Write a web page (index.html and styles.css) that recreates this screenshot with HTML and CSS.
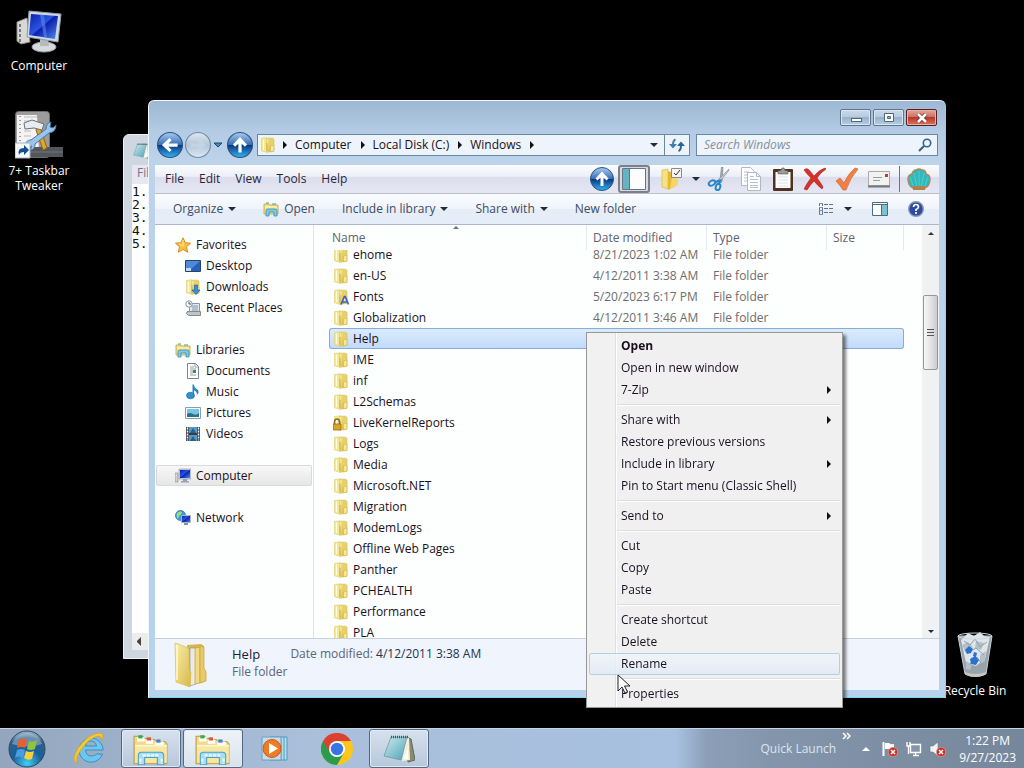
FILE: index.html
```html
<!DOCTYPE html>
<html lang="en">
<head>
    <meta charset="UTF-8">
    <meta name="viewport" content="width=device-width, initial-scale=1.0">
    <title>Windows</title>
    <link rel="stylesheet" href="styles.css">
</head>
<body>
    <!-- Shared icons -->
    <svg class="sprite" width="0" height="0" aria-hidden="true">
        <defs>
            <linearGradient id="gFolder" x1="0" x2="1" y1="0" y2="1">
                <stop offset="0" stop-color="#f8efae"/>
                <stop offset="1" stop-color="#d8b845"/>
            </linearGradient>
            <linearGradient id="gScreen" x1="0" x2="1" y1="0" y2="1">
                <stop offset="0" stop-color="#0a1fb0"/>
                <stop offset=".45" stop-color="#2a55e0"/>
                <stop offset=".5" stop-color="#0b1fae"/>
                <stop offset="1" stop-color="#4f8cf0"/>
            </linearGradient>
            <linearGradient id="gOrb" x1="0" x2="0" y1="0" y2="1">
                <stop offset="0" stop-color="#a9cdf0"/>
                <stop offset=".48" stop-color="#3a6fb8"/>
                <stop offset=".5" stop-color="#08347f"/>
                <stop offset="1" stop-color="#35b5f2"/>
            </linearGradient>
            <linearGradient id="gGrey" x1="0" x2="0" y1="0" y2="1">
                <stop offset="0" stop-color="#dde7f1"/>
                <stop offset=".5" stop-color="#b4c6d9"/>
                <stop offset="1" stop-color="#dbe8f4"/>
            </linearGradient>
            <linearGradient id="gPad" x1="0" x2="1" y1="0" y2="1">
                <stop offset="0" stop-color="#cdeaf0"/>
                <stop offset="1" stop-color="#4fa3b5"/>
            </linearGradient>
            <radialGradient id="gStart" cx=".5" cy=".9" r=".9">
                <stop offset="0" stop-color="#3fd0f5"/>
                <stop offset=".45" stop-color="#1a5f9c"/>
                <stop offset=".8" stop-color="#2f5f8c"/>
                <stop offset="1" stop-color="#a5c0d5"/>
            </radialGradient>
        </defs>
        <symbol id="folder" viewBox="0 0 16 16">
            <path d="M1.500 1.500L7 .8v14.500l-5.500-1.500z" fill="#f5e98f" stroke="#dccb6a" stroke-width=".6"/>
            <path d="M7 1.200h5.500l1.500 1v12l-7 1z" fill="#e8d268" stroke="#d3b951" stroke-width=".6"/>
            <path d="M7 1.500l3 1.500v11.500l-3 1z" fill="url(#gFolder)"/>
            <path d="M10.500 9l3.500-1v6l-3.500 1z" fill="#f5e794" stroke="#c9aa45" stroke-width=".5"/>
            <path d="M3.500 2.500v10.500" stroke="#fffce2"/>
            <path d="M7 6v8" stroke="#c4a43d" stroke-width=".8"/>
        </symbol>
        <symbol id="library" viewBox="0 0 16 16">
            <path d="M1 3h5l1 1h8v9H1z" fill="#f1df83" stroke="#b9a552" stroke-width=".8"/>
            <path d="M3 2h3M9 3h4" stroke="#62a05a"/>
            <path d="M2 6h12" stroke="#fffbd8"/>
            <path d="M3 15v-5q0-2 2-2h7q2 0 2 2v5h-3v-4H6v4z" fill="#7ccbe8" stroke="#3d8db5" stroke-width=".8"/>
        </symbol>
        <symbol id="explorer" viewBox="0 0 34 30">
            <path d="M1 5V3h8l2 2h2l1 1h6l2 2h8l2 2v19H1z" fill="#efdb8b" stroke="#b79b4b"/>
            <path d="M4 4h7v4H4zM12 6h7v4h-7zM21 8h8v4h-8z" fill="#fff"/>
            <path d="M5 2h4v3H5z" fill="#2fae4c"/>
            <path d="M13 4h4v3h-4z" fill="#d85a35"/>
            <path d="M22 6h4v3h-4z" fill="#4a80c8"/>
            <path d="M2 11h30v17H2z" fill="#f6e7a3"/>
            <path d="M2 12h30" stroke="#fffbe0"/>
            <path d="M5 30V21q0-3 3-3h18q3 0 3 3v9h-6v-7H11v7z" fill="#a8dcf0" stroke="#4f9fc4"/>
            <path d="M7 24v5M27 24v5M9 21h16" stroke="#e6f8ff" stroke-width="2" stroke-dasharray="3 1"/>
        </symbol>
        <symbol id="pc" viewBox="0 0 16 16">
            <path d="M0 5h3v9H0z" fill="#d3d3c0" stroke="#8c8c7a" stroke-width=".6"/>
            <path d="M4 1h12v10H4z" fill="#c7d2e2" stroke="#8894a8" stroke-width=".6"/>
            <path d="M5 2h10v8H5z" fill="url(#gScreen)"/>
            <path d="M8 11h4v2H8zM6 13h8v1.500H6z" fill="#9aa4b4"/>
        </symbol>
        <symbol id="up" viewBox="0 0 24 24">
            <circle cx="12" cy="12" r="11.500" fill="url(#gOrb)" stroke="#29527f"/>
            <path d="M12 4.500l6.500 7-2 2-3-3V19h-3v-8.500l-3 3-2-2z" fill="#fff"/>
        </symbol>
        <symbol id="notepad" viewBox="0 0 32 28">
            <path d="M23 2l5 2 4 21-7 2z" fill="#8a8a70" stroke="#5f6a58"/>
            <path d="M23 3l3 0 1 22-8 1z" fill="#f3efdc"/>
            <path d="M8 2h16l-6 23L1 21z" fill="url(#gPad)" stroke="#6d99a3" stroke-width=".8"/>
            <path d="M8 2h17" stroke="#44585f" stroke-width="2.500" stroke-dasharray="1 1"/>
            <path d="M20 24l5-10v10z" fill="#fff"/>
        </symbol>
        <symbol id="badge" viewBox="0 0 10 10">
            <circle cx="5" cy="5" r="4.700" fill="#c93227" stroke="#eba59f" stroke-width=".6"/>
            <path d="M3 3l4 4M7 3L3 7" stroke="#fff" stroke-width="1.500"/>
        </symbol>
    </svg>

    <main class="desktop">
        <!-- Desktop shortcuts -->
        <a class="shortcut shortcut-computer" href="#">
            <svg width="46" height="44" viewBox="0 0 46 44">
                <path d="M1 12l10-4 3 24-9 2-4-3z" fill="#d8d8d4" stroke="#8f8f8c"/>
                <path d="M4 14v18" stroke="#777" stroke-width="2" stroke-dasharray="3 2"/>
                <ellipse cx="28" cy="37" rx="12" ry="5" fill="#d7dadd" stroke="#9ba1a6"/>
                <path d="M24 28h8l1 8h-9z" fill="#b5babf"/>
                <path d="M13 1l32 3-3 28-31-5z" fill="#cfd9e4" stroke="#8d99a7"/>
                <path d="M15 4l27 2-3 23-26-4z" fill="url(#gScreen)"/>
                <path d="M24 5l4 0 3 22-3 0z" fill="#5c86ec" opacity=".6"/>
            </svg>
            <span>Computer</span>
        </a>
        <a class="shortcut shortcut-tweaker" href="#">
            <svg width="48" height="48" viewBox="0 0 48 48">
                <rect x=".5" y=".5" width="34" height="46" rx="3" fill="#9c9c9c" stroke="#6c6c6c"/>
                <path d="M2 4h20l2 36H2z" fill="#f3f3f3"/>
                <path d="M5 5v34" stroke="#444" stroke-dasharray="1 3"/>
                <path d="M9 6h13M9 10h10M9 15h8M9 20h7M9 25h7" stroke="#bbb"/>
                <path d="M15 36h33v10H15z" fill="#53565a"/>
                <path d="M15 41h33" stroke="#73777c"/>
                <path d="M24 13l8 24-4 2-7-20z" fill="#dca52f" stroke="#906413"/>
                <path d="M9 12l8-3 12 4-2 6-8-2-9 1z" fill="#e7ecf0" stroke="#67727c"/>
                <path d="M11 36a5 5 0 0 1 5-7l15-11q0-6 5-7l-1 5 3 1 3-3q0 7-7 8L20 33q0 6-5 6l2-4z" fill="#9cc3ec" stroke="#47749f"/>
                <path d="M0 32h15v15H0z" fill="#f7f9fb" stroke="#9fb4c6"/>
                <path d="M4 44q-2-7 5-7v-3l5 5-5 5v-3q-4 0-5 3z" fill="#134f93"/>
            </svg>
            <span>7+ Taskbar Tweaker</span>
        </a>
        <a class="shortcut shortcut-bin" href="#">
            <svg width="38" height="48" viewBox="0 0 38 48">
                <path d="M2 5h34l-6 38q-11 5-21 0z" fill="#98a3ac" stroke="#c4ced6"/>
                <path d="M5 9l7-7 6 3 6-4 4 4 6 1-5 22-9 7-10-3z" fill="#dfe5e9"/>
                <path d="M6 14l6-3 5 5-7 6zM20 10l8 2-3 7-6-2zM24 24l6-4-1 10-5 3zM10 30l6 3-2 6-4-1z" fill="#b4c0c9"/>
                <path d="M8 10l6 4 5-6 5 8 7-5M11 22l9-5 8 7M13 34l8-8 6 9" stroke="#91a0ac" fill="none"/>
                <path d="M9 19l4-4 4 3-2 4-4 1zM14 28l5-3 4 4-3 5-5-1zM18 21l3 1-1 4-3-1z" fill="#2b70cb"/>
                <path d="M9 41q10 4 21 0l-1 3q-10 4-19 0z" fill="#c8c8c2"/>
                <ellipse cx="19" cy="5" rx="17" ry="3" fill="none" stroke="#ccd6dd"/>
            </svg>
            <span>Recycle Bin</span>
        </a>

        <!-- Notepad, behind the Explorer window -->
        <section class="notepad">
            <header class="notepad-title"><svg width="18" height="16"><use href="#notepad"/></svg></header>
            <nav class="notepad-menu">File</nav>
            <pre class="notepad-text">1.
2.
3.
4.
5.</pre>
            <footer class="notepad-scroll"><span class="arrow-left"></span></footer>
        </section>

        <!-- Explorer -->
        <section class="window">
            <header class="titlebar">
                <button class="caption" aria-label="Minimize"><svg width="14" height="10"><rect x="2.500" y="5.500" width="10" height="3" fill="#fff" stroke="#52657c"/></svg></button>
                <button class="caption" aria-label="Maximize"><svg width="14" height="10"><path d="M2.500.5h9v8h-9zM5.500 3.500h3v2h-3z" fill="#fff" fill-rule="evenodd" stroke="#52657c"/></svg></button>
                <button class="caption close" aria-label="Close"><svg width="14" height="10"><path d="M3 1l8 8M11 1L3 9" stroke="#74302a" stroke-width="4"/><path d="M3 1l8 8M11 1L3 9" stroke="#fff" stroke-width="2.500"/></svg></button>
            </header>

            <div class="navbar">
                <button class="round" aria-label="Back"><svg width="26" height="26" viewBox="0 0 24 24"><circle cx="12" cy="12" r="11.500" fill="url(#gOrb)" stroke="#29527f"/><path d="M4.500 12l7-6.500 2 2-3 3H19v3h-8.500l3 3-2 2z" fill="#fff"/></svg></button>
                <button class="round" aria-label="Forward"><svg width="26" height="26" viewBox="0 0 24 24"><circle cx="12" cy="12" r="11.500" fill="url(#gGrey)" stroke="#6f8aa8"/><path d="M19.500 12l-7-6.500-2 2 3 3H5v3h8.500l-3 3 2 2z" fill="#c9d6e4" opacity=".8"/></svg></button>
                <button class="recent" aria-label="Recent pages"><svg width="10" height="6"><path d="M1 1h8L5 5z" fill="#3f8fb8" stroke="#1d4668"/></svg></button>
                <button class="round" aria-label="Up"><svg width="26" height="26"><use href="#up"/></svg></button>
                <div class="address">
                    <svg width="16" height="16"><use href="#folder"/></svg>
                    <span class="arrow-right"></span><a href="#">Computer</a>
                    <span class="arrow-right"></span><a href="#">Local Disk (C:)</a>
                    <span class="arrow-right"></span><a href="#">Windows</a>
                    <span class="arrow-right"></span>
                    <span class="arrow-down push"></span>
                    <button class="refresh" aria-label="Refresh"><svg width="16" height="16" viewBox="0 0 16 16"><path d="M6.500 2.500Q4 3.500 4 8" fill="none" stroke="#3f7fae" stroke-width="2"/><path d="M0 7h8l-4 4.500z" fill="#3f7fae"/><path d="M9.500 14q2.500-1 2.500-5.500" fill="none" stroke="#2f6394" stroke-width="2"/><path d="M8 9h8l-4-4.500z" fill="#2f6394"/></svg></button>
                </div>
                <label class="search">
                    <input type="search" placeholder="Search Windows" aria-label="Search Windows">
                    <svg width="14" height="14" viewBox="0 0 14 14"><circle cx="9" cy="5" r="3.700" fill="#eaf6fd" stroke="#35638c" stroke-width="1.600"/><path d="M6 8l-5 5" stroke="#35638c" stroke-width="2.200"/></svg>
                </label>
            </div>

            <nav class="menubar">
                <button>File</button>
                <button>Edit</button>
                <button>View</button>
                <button>Tools</button>
                <button>Help</button>
                <div class="tools">
                    <button aria-label="Up one level"><svg width="24" height="24"><use href="#up"/></svg></button>
                    <button class="pressed" aria-label="Navigation pane"><svg width="26" height="24"><path d="M1.500 1.500h23v21h-23z" fill="#fdfdfd" stroke="#677687"/><path d="M2 2h6v20H2z" fill="#65b3c4"/><path d="M8.500 2v20" stroke="#4b7e8e"/></svg></button>
                    <button aria-label="Folder options"><svg width="24" height="24" viewBox="0 0 24 24"><path d="M2 3l6-1v20l-6-2z" fill="#f5e285" stroke="#d4b347" stroke-width=".6"/><path d="M8 4l8 3v12l-8 4z" fill="#e4b93a"/><path d="M12 10h6v8l-8 4z" fill="#f6d667"/><path d="M11.500 1.500h10v9h-10z" fill="#f3f3f3" stroke="#8b8b8b"/><path d="M14 6l2 2 4-5" fill="none" stroke="#333"/></svg></button>
                    <button class="drop" aria-label="More options"><span class="arrow-down"></span></button>
                    <button aria-label="Cut"><svg width="24" height="24" viewBox="0 0 24 24"><path d="M14.500 0l1.500 0-1 15-2.500 1z" fill="#9fa9b1" stroke="#6c7a86" stroke-width=".5"/><path d="M22 2l-.5 2L11 17l-2-2z" fill="#c3cad0" stroke="#6c7a86" stroke-width=".5"/><ellipse cx="5" cy="16" rx="3.500" ry="2.300" transform="rotate(-30 5 16)" fill="none" stroke="#2685c8" stroke-width="2"/><ellipse cx="11" cy="20" rx="2.200" ry="3.200" transform="rotate(20 11 20)" fill="none" stroke="#2685c8" stroke-width="2"/><path d="M8 15l5-1.500-1 4" fill="none" stroke="#2685c8" stroke-width="2"/></svg></button>
                    <button aria-label="Copy"><svg width="24" height="24" viewBox="0 0 24 24"><path d="M2.500.5h9l4 4v14h-13z" fill="#fff" stroke="#b1b8c1"/><path d="M5 5h5M5 8h3M5 11h3M5 14h3" stroke="#b4c0cd"/><path d="M8.500 5.500h9l4 4v14h-13z" fill="#fff" stroke="#b1b8c1"/><path d="M17.500 5.500v4h4" fill="none" stroke="#b1b8c1"/><path d="M11 9.500h4M11 12.500h8M11 15.500h8M11 18.500h8M11 20.500h8" stroke="#b4c0cd"/></svg></button>
                    <button aria-label="Paste"><svg width="24" height="24" viewBox="0 0 24 24"><rect x="2" y="2" width="20" height="22" rx="1" fill="#50331f"/><path d="M4.500 5h15v16h-15z" fill="#fff"/><path d="M7 4q4 0 4-3h2q0 3 4 3v3H7z" fill="#9b9b98" stroke="#595959" stroke-width=".6"/><path d="M7 10h10M7 13h10M7 16h10M7 19h10" stroke="#dde2e7"/></svg></button>
                    <button aria-label="Delete"><svg width="24" height="24" viewBox="0 0 24 24"><path d="M1 3q2-2 4-1 3 3 6 7 5-6 11-8l1 1q-6 4-9 9 4 5 6 9l-1 2q-4-3-8-8-4 4-7 9l-3-1q3-6 7-11-4-4-7-8z" fill="#d6322a" stroke="#ac1f1b" stroke-width=".6"/></svg></button>
                    <button aria-label="Properties"><svg width="24" height="24" viewBox="0 0 24 24"><path d="M1 14l4-3 4 5Q13 7 20 1l3 1Q15 11 11 23H8Q5 18 1 14z" fill="#f18045" stroke="#d5632b" stroke-width=".7"/></svg></button>
                    <button aria-label="E-mail"><svg width="24" height="24" viewBox="0 0 24 24"><path d="M1.500 4.500h21v14h-21z" fill="#f2f2ef" stroke="#aaa"/><path d="M1 19.500h22" stroke="#777" stroke-width="2"/><path d="M6 10.500h9M6 13.500h7" stroke="#94a0a8"/><path d="M18 7h3v3h-3z" fill="#cb3540"/></svg></button>
                    <button class="shell" aria-label="Classic Shell"><svg width="24" height="24" viewBox="0 0 24 24"><path d="M6 21q-5-2-5-9 0-4 4-5 1-4 4-4 3-2 6 0 4 0 4 4 4 1 4 5 0 7-5 9z" fill="#2fb9bd" stroke="#b08a55" stroke-width="1.400"/><path d="M7 21L3 10M10 21L7 6M12 21V4M14 21l3-15M17 21l4-11" stroke="#58d3d0" stroke-width=".8"/><path d="M6 19h12v4H6z" fill="#b38243"/></svg></button>
                </div>
            </nav>

            <div class="commandbar">
                <button class="organize">Organize <span class="arrow-down"></span></button>
                <button><svg width="16" height="16"><use href="#library"/></svg> Open</button>
                <button>Include in library <span class="arrow-down"></span></button>
                <button>Share with <span class="arrow-down"></span></button>
                <button>New folder</button>
                <div class="view-tools">
                    <button aria-label="Change your view"><svg width="16" height="14"><path d="M1.500 1v12M4.500 1v12" stroke="#61748a" stroke-dasharray="3 1"/><path d="M1 1.500h4M1 5.500h4M1 8.500h4M1 12.500h4" stroke="#8292a5"/><path d="M6 2.500h10M6 6.500h10M6 10.500h10" stroke="#61748a" stroke-dasharray="4 1"/></svg> <span class="arrow-down"></span></button>
                    <button aria-label="Preview pane"><svg width="16" height="14"><path d="M.5.5h15v13H.5z" fill="#fff" stroke="#4b6b86"/><path d="M10 3h5v10h-5z" fill="#7bc1d0"/><path d="M0 2.500h16M9.500 3v10" stroke="#4b6b86"/></svg></button>
                    <button aria-label="Help"><svg width="16" height="16"><circle cx="8" cy="8" r="7.300" fill="#2c4ba0" stroke="#8996b3" stroke-width="1.400"/><path d="M5.500 6q0-2.500 2.500-2.500t2.500 2.500Q10.500 7.500 8 8.500V10M8 11v2" fill="none" stroke="#fff" stroke-width="1.700"/></svg></button>
                </div>
            </div>

            <div class="content">
                <nav class="tree">
                    <ul>
                        <li class="root"><svg width="16" height="16"><path d="M8 .8l2.200 4.900 5.300.5-4 3.600 1.200 5.400L8 12.500l-4.700 2.700 1.200-5.400-4-3.600 5.300-.5z" fill="#fdc03c" stroke="#d98b22"/><path d="M8 3v6l-4-2" fill="none" stroke="#ffe89a"/></svg> Favorites</li>
                        <li><svg width="16" height="16"><path d="M.5 2.500h15v11H.5z" fill="#2c5fb8" stroke="#24446d"/><path d="M1 3h14l-10 9H1z" fill="#4e8ad8"/><path d="M1 13h5v-3H1z" fill="#c0dbef"/></svg> Desktop</li>
                        <li><svg width="16" height="16"><use href="#folder"/><path d="M9.500 6h3v5H15l-4 4.500L7 11h2.500z" fill="#3291d8" stroke="#1b659e" stroke-width=".7"/></svg> Downloads</li>
                        <li><svg width="16" height="16"><path d="M4.500 3.500h10v9h-10z" fill="#e6e9eb" stroke="#8e969c"/><path d="M1.500 13.500q0-3 3-2h11v4h-12z" fill="#bfc4c8" stroke="#85898d"/><path d="M6 6h7M7 8h6M7 10h6" stroke="#7c98ae"/><circle cx="4" cy="4" r="3.200" fill="#f5f7f8" stroke="#8a98a3"/><path d="M4 2v2h2" fill="none" stroke="#555"/></svg> Recent Places</li>
                    </ul>
                    <ul>
                        <li class="root"><svg width="16" height="16"><use href="#library"/></svg> Libraries</li>
                        <li><svg width="16" height="16"><path d="M2.500.5h8l3 3v12h-11z" fill="#fff" stroke="#7b858c"/><path d="M10 1v3h3M5 4h4M5 6h6M5 8h3M5 10h3M5 12h6" fill="none" stroke="#929ea6"/><path d="M8 7h3v3H8z" fill="#328a70"/></svg> Documents</li>
                        <li><svg width="16" height="16"><ellipse cx="5.500" cy="11.500" rx="4" ry="3.300" fill="#2c91cf" stroke="#17659c" stroke-width=".6"/><path d="M7.500.5H9q0 3 3.500 5 2.500 2.500-.5 5.500 0-4-3-4.500V12H7.500z" fill="#2a86c6"/></svg> Music</li>
                        <li><svg width="16" height="16"><path d="M.5 2.500h15v11H.5z" fill="#fff" stroke="#899fac"/><path d="M2 4h12v8H2z" fill="#79c5e7"/><path d="M2 9q3-2 6 0t6-1v4H2z" fill="#2b7088"/></svg> Pictures</li>
                        <li><svg width="16" height="16"><path d="M1 1h14v14H1z" fill="#373c40"/><path d="M4 1h8v6H4zM4 9h8v6H4z" fill="#5799c7"/><path d="M5 7l3-5 3 5zM5 15l3-5 3 5z" fill="#295f8c"/><path d="M2.500 1.500v13M13.500 1.500v13" stroke="#fff" stroke-width="1.500" stroke-dasharray="2 1"/></svg> Videos</li>
                    </ul>
                    <ul>
                        <li class="root current"><svg width="16" height="16"><use href="#pc"/></svg> Computer</li>
                    </ul>
                    <ul>
                        <li class="root"><svg width="16" height="16"><circle cx="5.500" cy="5.500" r="5" fill="#3c9ed0" stroke="#226c96" stroke-width=".7"/><path d="M2 3q4-3 5 0L4 6 3 9Q1 7 2 3z" fill="#9fdc90"/><path d="M6.500 5.500h9v7h-9z" fill="url(#gScreen)" stroke="#a9b5c6"/><path d="M9 13h4v2H9z" fill="#8995a6"/></svg> Network</li>
                    </ul>
                </nav>

                <div class="files" id="files">
                    <table class="file-table">
                        <thead>
                            <tr><th class="col-name">Name<span class="sort"></span></th><th class="col-date">Date modified</th><th class="col-type">Type</th><th class="col-size">Size</th></tr>
                        </thead>
                        <tbody id="file-rows"></tbody>
                    </table>
                </div>

                <div class="scrollbar">
                    <span class="arrow-up"></span>
                    <span class="thumb"></span>
                    <span class="arrow-down small"></span>
                </div>
            </div>

            <footer class="details">
                <svg width="36" height="46" viewBox="0 0 36 46">
                    <path d="M14 3l14-1 3 2v36l-16 3z" fill="#d9b64d"/>
                    <path d="M17 6h6v36l-6 2z" fill="#eceae4" stroke="#9a9890" stroke-width=".7"/>
                    <path d="M22 6l5-1v36l-5 1z" fill="#f0da84" stroke="#c59e3a" stroke-width=".7"/>
                    <path d="M27 4l4 1v21l2 4v9l-6 2z" fill="#e8cb66" stroke="#c59e3a" stroke-width=".7"/>
                    <path d="M2 1l11 4q3 1 3 4v18l2 4-1 14L3 40z" fill="url(#gFolder)" stroke="#d9bd55" stroke-width=".7"/>
                    <path d="M4 3v35" stroke="#fffbd5" stroke-width="1.500"/>
                </svg>
                <div class="details-name">
                    <strong>Help</strong>
                    <span>File folder</span>
                </div>
                <p class="details-date">Date modified: <b>4/12/2011 3:38 AM</b></p>
            </footer>
        </section>

        <!-- Context menu -->
        <menu class="context">
            <li><button class="default">Open</button></li>
            <li><button>Open in new window</button></li>
            <li><button>7-Zip <span class="arrow-right"></span></button></li>
            <li class="divider"></li>
            <li><button>Share with <span class="arrow-right"></span></button></li>
            <li><button>Restore previous versions</button></li>
            <li><button>Include in library <span class="arrow-right"></span></button></li>
            <li><button>Pin to Start menu (Classic Shell)</button></li>
            <li class="divider"></li>
            <li><button>Send to <span class="arrow-right"></span></button></li>
            <li class="divider"></li>
            <li><button>Cut</button></li>
            <li><button>Copy</button></li>
            <li><button>Paste</button></li>
            <li class="divider"></li>
            <li><button>Create shortcut</button></li>
            <li><button>Delete</button></li>
            <li><button class="hot">Rename</button></li>
            <li class="divider"></li>
            <li><button>Properties</button></li>
        </menu>
        <svg class="cursor" width="14" height="21"><path d="M1 1v16l4-4 3 6 2.500-1-3-6H13z" fill="#fff" stroke="#222"/></svg>
    </main>

    <footer class="taskbar">
        <button class="start" aria-label="Start">
            <svg width="38" height="38" viewBox="0 0 38 38">
                <circle cx="19" cy="19" r="18" fill="url(#gStart)" stroke="#31475c"/>
                <path d="M4 14Q8 3 19 3t15 11q-15 5-30 0z" fill="#fff" opacity=".3"/>
                <path d="M11 10q4-3 8 0l-2 8q-4-2-8 0z" fill="#e8602c"/>
                <path d="M21 11q4 2 8-1l-2 9q-4 2-8 0z" fill="#8fc43c"/>
                <path d="M9 20q4-2 8 0l-2 8q-4-3-8 0z" fill="#4a9de0"/>
                <path d="M18 21q4 2 8 0l-2 8q-4 2-8-1z" fill="#fbd13b"/>
            </svg>
        </button>
        <button class="task" aria-label="Internet Explorer">
            <svg width="34" height="34" viewBox="0 0 34 34">
                <path d="M30.500 22a12 12 0 1 1 .5-5.500v1.500H13.500q.5 6 6 6 3.500 0 5-2zM13.500 14h11q-1-5-5.500-5t-5.500 5z" fill="#6cc6ee" stroke="#2c83ba" stroke-width=".8"/>
                <path d="M6 31Q-2 30 6 16 16 2 27 1q6 0 3 8 0-5-4-5Q17 6 9 18 2 28 6 31z" fill="#f8c832" stroke="#cc9d20" stroke-width=".6"/>
            </svg>
        </button>
        <button class="task open" aria-label="Windows Explorer"><svg width="36" height="32"><use href="#explorer"/></svg></button>
        <button class="task open active" aria-label="Windows Explorer"><svg width="36" height="32"><use href="#explorer"/></svg></button>
        <button class="task" aria-label="Media Player">
            <svg width="28" height="28" viewBox="0 0 28 28">
                <path d="M9 2h17v23H9z" fill="#b7dceb" stroke="#4c9bbd"/>
                <path d="M23 2v23M20 2v23" stroke="#4c9bbd"/>
                <path d="M1 2h19v23H1z" fill="#c6dced" stroke="#6f9fbd"/>
                <circle cx="11" cy="13.500" r="9" fill="#ef7c25" stroke="#c95c11"/>
                <path d="M8 8l9 5.500L8 19z" fill="#fff"/>
            </svg>
        </button>
        <button class="task" aria-label="Chrome">
            <svg width="32" height="32" viewBox="0 0 32 32">
                <circle cx="16" cy="16" r="16" fill="#fbc71a"/>
                <path d="M2.100 8A16 16 0 0 0 16 32l7-12-7-4z" fill="#2d9b4e"/>
                <path d="M2.100 8A16 16 0 0 1 29.900 8H16L9 20z" fill="#dc4032"/>
                <circle cx="16" cy="16" r="8" fill="#fff"/>
                <circle cx="16" cy="16" r="6.200" fill="#3775e4"/>
            </svg>
        </button>
        <button class="task open" aria-label="Notepad"><svg width="32" height="30"><use href="#notepad"/></svg></button>

        <div class="tray">
            <span class="quick">Quick Launch</span>
            <svg class="chevron" width="9" height="8"><path d="M1 1l3 3-3 3M5 1l3 3-3 3" fill="none" stroke="#fff" stroke-width="1.500"/></svg>
            <span class="arrow-up light"></span>
            <svg width="18" height="16"><path d="M2.500 1v14" stroke="#fff" stroke-width="2"/><path d="M4 2h4q2 2 5 1v6q-4 0-5-1H4z" fill="#fff"/><use href="#badge" x="7" y="6" width="10" height="10"/></svg>
            <svg width="18" height="16"><path d="M5.500 3.500h10v8h-10zM8 14.500h6M10.500 12v2" fill="#8697ab" stroke="#fff" stroke-width="1.400"/><path d="M2 1v4h3V1M3.500 5v8" fill="none" stroke="#fff" stroke-width="1.400"/></svg>
            <svg width="18" height="16"><path d="M1 5h3l5-4v14l-5-4H1z" fill="#f2f5f8" stroke="#66778b" stroke-width=".6"/><use href="#badge" x="7" y="6" width="10" height="10"/></svg>
            <time class="clock">1:22 PM<br>9/27/2023</time>
        </div>
    </footer>

    <script>
        const files = [
            { name: 'ehome', date: '8/21/2023 1:02 AM', type: 'File folder' },
            { name: 'en-US', date: '4/12/2011 3:38 AM', type: 'File folder' },
            { name: 'Fonts', date: '5/20/2023 6:17 PM', type: 'File folder', overlay: 'font' },
            { name: 'Globalization', date: '4/12/2011 3:46 AM', type: 'File folder' },
            { name: 'Help', selected: true },
            { name: 'IME' },
            { name: 'inf' },
            { name: 'L2Schemas' },
            { name: 'LiveKernelReports', overlay: 'lock' },
            { name: 'Logs' },
            { name: 'Media' },
            { name: 'Microsoft.NET' },
            { name: 'Migration' },
            { name: 'ModemLogs' },
            { name: 'Offline Web Pages' },
            { name: 'Panther' },
            { name: 'PCHEALTH' },
            { name: 'Performance' },
            { name: 'PLA' }
        ];

        const overlays = {
            font: '<path d="M8 15.500l3.300-8h.9l3.300 8M9.500 13h4.500" fill="none" stroke="#3f62c8" stroke-width="1.700"/>',
            lock: '<path d="M1.500 9V7q0-3 2.500-3t2.500 3v2" fill="none" stroke="#8a6a1c" stroke-width="1.500"/><path d="M0 9h8v6H0z" fill="#d9a520" stroke="#8a6512" stroke-width=".7"/>'
        };

        const fileRows = document.getElementById('file-rows');

        files.forEach(file => {
            const row = document.createElement('tr');
            if (file.selected) row.classList.add('selected');
            row.innerHTML = `
                <td><svg width="16" height="16"><use href="#folder"/>${overlays[file.overlay] || ''}</svg>${file.name}</td>
                <td>${file.date || ''}</td>
                <td>${file.type || ''}</td>
                <td></td>`;
            fileRows.appendChild(row);
        });

        // List is scrolled a little so the first row sits under the header
        document.getElementById('files').scrollTop = 6;
    </script>
</body>
</html>
```

FILE: styles.css
```css
/* Basic Reset */
* {
    margin: 0;
    padding: 0;
    box-sizing: border-box;
}

body {
    font-family: 'Open Sans', 'Noto Sans', sans-serif;
    font-size: 12px;
    line-height: 16px;
    color: #1a1020;
    background: #000;
    height: 100vh;
    display: flex;
    flex-direction: column;
    overflow: hidden;
}

button {
    font: inherit;
    color: inherit;
    background: none;
    border: none;
    display: flex;
    align-items: center;
}

a {
    color: inherit;
    text-decoration: none;
}

ul, menu {
    list-style: none;
}

svg {
    display: block;
    flex: none;
}

.sprite {
    position: absolute;
}

.desktop {
    flex: 1;
    position: relative;
}

/* Arrows */
.arrow-down {
    border: 4px solid transparent;
    border-top-color: #1e2c40;
    border-bottom: none;
}

.arrow-down.small {
    border-width: 3px;
    border-bottom: none;
}

.arrow-up {
    border: 3px solid transparent;
    border-bottom-color: #333;
    border-top: none;
}

.arrow-up.light {
    border-width: 4px;
    border-top: none;
    border-bottom-color: #fff;
}

.arrow-right {
    border: 4px solid transparent;
    border-left-color: #111;
    border-right: none;
}

.arrow-left {
    border: 4px solid transparent;
    border-right-color: #444;
    border-left: none;
}

/* Desktop shortcuts */
.shortcut {
    position: absolute;
    width: 76px;
    display: flex;
    flex-direction: column;
    align-items: center;
    gap: 4px;
    line-height: 15px;
    color: #fff;
    text-align: center;
    text-shadow: 0 1px 2px #000;
}

.shortcut-computer {
    left: 1px;
    top: 10px;
}

.shortcut-tweaker {
    left: 1px;
    top: 111px;
}

.shortcut-bin {
    right: 11px;
    top: 631px;
}

/* Notepad */
.notepad {
    position: absolute;
    left: 123px;
    top: 134px;
    width: 400px;
    height: 525px;
    padding: 0 8px 8px;
    border: 1px solid #edf1f5;
    border-radius: 6px 6px 0 0;
    background: #ced6df;
    display: flex;
    flex-direction: column;
}

.notepad-title {
    height: 30px;
    padding: 8px 0 0 1px;
}

.notepad-menu {
    height: 19px;
    padding: 0 5px;
    background: #e6e7f1;
    color: #7b7287;
}

.notepad-text {
    flex: 1;
    background: #fff;
    font: 13px/13px 'DejaVu Sans Mono', monospace;
    padding-top: 1px;
    color: #111;
}

.notepad-scroll {
    height: 17px;
    padding: 4px 5px;
    background: #ececec;
    display: flex;
}

/* Explorer window */
.window {
    position: absolute;
    left: 148px;
    top: 100px;
    width: 798px;
    height: 598px;
    padding: 0 6px 7px;
    border: 1px solid #7fd8ea;
    border-top-color: #f2f8fd;
    border-left-color: #eef5fb;
    border-radius: 6px 6px 0 0;
    background: linear-gradient(#9db8d3, #b3cbe4 30px, #bcd3ea 60px, #b7d2ec);
    display: flex;
    flex-direction: column;
}

.titlebar {
    height: 29px;
    padding: 8px 2px 0;
    display: flex;
    justify-content: flex-end;
    align-items: flex-start;
    gap: 2px;
}

.caption {
    width: 31px;
    height: 17px;
    justify-content: center;
    border: 1px solid #5f7590;
    border-radius: 2px;
    background: linear-gradient(#c9d9ea, #b6cade 50%, #98b1cc 50%, #b6cfe6);
    box-shadow: inset 0 0 0 1px #d9e6f2;
}

.caption.close {
    border-color: #552226;
    background: linear-gradient(#e5a79d, #cf6a5b 50%, #b53a2b 50%, #d5765d);
    box-shadow: inset 0 0 0 1px #e7b0a6;
}

.navbar {
    height: 35px;
    padding: 0 1px 6px 2px;
    display: flex;
    align-items: center;
}

.round {
    margin-right: 2px;
}

.recent {
    padding: 0 4px 0 2px;
}

.round + .round {
    margin-right: 0;
}

.address {
    flex: 1;
    height: 22px;
    margin: 0 6px 0 2px;
    padding-left: 2px;
    border: 1px solid #6b86a3;
    background: #eef4fb;
    display: flex;
    align-items: center;
}

.address a {
    margin: 0 9px 0 8px;
}

.address svg {
    margin-right: 7px;
}

.address .push {
    margin: 0 6px 0 auto;
}

.refresh {
    height: 20px;
    padding: 0 4px;
    border-left: 1px solid #6b86a3;
}

.address .refresh svg {
    margin: 0;
}

.search {
    width: 242px;
    height: 22px;
    padding: 0 5px 0 7px;
    border: 1px solid #6b86a3;
    background: #eef4fb;
    display: flex;
    align-items: center;
}

.search input {
    flex: 1;
    min-width: 0;
    border: none;
    background: none;
    font: inherit;
}

.search input::placeholder {
    font-style: italic;
    color: #868f9a;
}

/* Menu bar */
.menubar {
    height: 29px;
    padding-left: 10px;
    background: linear-gradient(#fbfcfe, #edeff8 40%, #dcdeed 45%, #e5e7f3);
    border-bottom: 1px solid #b9bccb;
    display: flex;
    align-items: center;
    gap: 15px;
    color: #2b1f3d;
}

.tools {
    margin-left: auto;
    height: 28px;
    padding-right: 8px;
    display: flex;
    align-items: center;
    gap: 8px;
}

.tools .pressed {
    height: 28px;
    margin: 0 2px 0 -4px;
    padding: 0 1px;
    border: 2px solid #7c8088;
    border-radius: 3px;
    background: #d7dae2;
}

.tools .drop {
    margin-right: -1px;
}

.shell {
    height: 26px;
    padding-left: 7px;
    border-left: 1px solid #70757f;
}

/* Command bar */
.commandbar {
    height: 31px;
    padding: 0 15px 0 18px;
    background: linear-gradient(#fafcfe, #eff4fb 50%, #e6edf7 50%, #e5edf8);
    border-bottom: 1px solid #a9b8ca;
    display: flex;
    align-items: center;
    gap: 27px;
    color: #3c4c66;
}

.commandbar button {
    gap: 5px;
}

.view-tools {
    margin-left: auto;
    display: flex;
    align-items: center;
    gap: 20px;
}

.commandbar .view-tools button {
    gap: 10px;
}

/* Content */
.content {
    flex: 1;
    min-height: 0;
    background: #fdfefe;
    display: flex;
}

.tree {
    width: 159px;
    padding: 9px 1px;
    border-right: 1px solid #dbe5f0;
    display: flex;
    flex-direction: column;
    gap: 21px;
}

.tree li {
    height: 21px;
    padding-left: 29px;
    display: flex;
    align-items: center;
    gap: 5px;
}

.tree .root {
    padding-left: 19px;
}

.tree .current {
    padding-left: 18px;
    border: 1px solid #dadada;
    border-radius: 2px;
    background: linear-gradient(#f8f8f8, #e6e6e6);
}

.files {
    flex: 1;
    padding-left: 15px;
    overflow: hidden;
}

.file-table {
    table-layout: fixed;
    width: 575px;
    border-spacing: 0;
}

.file-table th {
    position: sticky;
    top: 0;
    height: 25px;
    padding: 1px 0 0 6px;
    background: #fdfefe;
    border-right: 1px solid #e3e9f1;
    color: #5d6370;
    font-weight: normal;
    text-align: left;
}

.file-table .col-name {
    width: 258px;
    padding-left: 3px;
}

.col-date, .col-type {
    width: 120px;
}

.sort {
    position: absolute;
    left: 124px;
    top: 1px;
    border: 3px solid transparent;
    border-bottom-color: #69727c;
    border-top: none;
}

.file-table td {
    height: 21px;
    padding-left: 6px;
    border: 0 solid #84acdd;
    color: #6d6d6d;
    white-space: nowrap;
}

.file-table td:first-child {
    padding-left: 4px;
    color: #1a1020;
}

.file-table td svg {
    display: inline-block;
    vertical-align: top;
    margin-right: 4px;
}

.selected td {
    border-width: 1px 0;
    background: linear-gradient(#dcebfc, #c1dbfc);
}

.file-table .selected td:first-child {
    border-left-width: 1px;
    border-radius: 3px 0 0 3px;
    padding-left: 3px;
}

.selected td:last-child {
    border-right-width: 1px;
    border-radius: 0 3px 3px 0;
}

.scrollbar {
    width: 17px;
    padding: 7px 0 5px;
    background: #f0f1f3;
    display: flex;
    flex-direction: column;
    align-items: center;
}

.thumb {
    width: 15px;
    height: 75px;
    margin: 60px 0 auto;
    border: 1px solid #979797;
    border-radius: 2px;
    background:
        repeating-linear-gradient(#555 0 1px, transparent 1px 3px) center / 7px 7px no-repeat,
        linear-gradient(90deg, #f6f6f6, #e4e4e6 50%, #cbcbd0);
}

/* Details pane */
.details {
    height: 52px;
    padding: 0 18px;
    background: #f0f4fd;
    border-top: 1px solid #c6d0de;
    display: flex;
    align-items: flex-start;
    color: #596679;
}

.details svg {
    margin: 3px 0 0;
}

.details-name {
    margin: 6px 3px 0 23px;
    line-height: 18px;
    display: flex;
    flex-direction: column;
}

.details-name strong {
    font-weight: normal;
    font-size: 13px;
    color: #1f1934;
}

.details-date {
    margin-top: 6px;
    line-height: 18px;
}

.details-date b {
    font-weight: normal;
    color: #24354f;
}

/* Context menu */
.context {
    position: absolute;
    left: 586px;
    top: 332px;
    width: 257px;
    padding: 2px;
    border: 1px solid #979797;
    background: linear-gradient(90deg, #f1f1f1 28px, #e0e0e0 28px, #e0e0e0 29px, #fff 29px, #fff 30px, #f0f0f0 30px);
    box-shadow: 3px 3px 3px rgba(0,0,0,0.5);
}

.context button {
    width: 100%;
    height: 22px;
    padding: 0 9px 0 32px;
    justify-content: space-between;
}

.context .default {
    font-weight: bold;
}

.context .hot {
    padding-left: 31px;
    border: 1px solid #b3cfe8;
    border-radius: 2px;
    background: linear-gradient(rgba(240,245,250,0.8), rgba(222,234,246,0.8));
}

.divider {
    height: 2px;
    margin: 3px 0 3px 28px;
    border-top: 1px solid #dcdcdc;
    background: #fff;
}

.cursor {
    position: absolute;
    left: 617px;
    top: 674px;
}

/* Taskbar */
.taskbar {
    position: relative;
    height: 40px;
    padding: 0 8px;
    border-top: 1px solid #c5d3e2;
    background: linear-gradient(90deg, #93a6bd, #a9bfda 30%, #a8c1e0 66%, #8c9fb8 69%, #8496ac 75%, #76879b);
    display: flex;
    align-items: center;
}

.start {
    margin-right: 13px;
}

.task {
    width: 60px;
    height: 39px;
    margin-right: 2px;
    justify-content: center;
}

.task.open {
    border: 1px solid #536983;
    border-radius: 3px;
    background: linear-gradient(#d7e1ed, #b7c7db);
    box-shadow: inset 0 0 0 1px #e1e9f2;
}

.task.active {
    background: linear-gradient(#eff3f8, #d9e2ec);
}

.tray {
    margin-left: auto;
    display: flex;
    align-items: center;
    gap: 6px;
    color: #fff;
}

.quick {
    color: #dbe5ef;
}

.chevron {
    align-self: flex-start;
    margin-right: 5px;
}

.arrow-up.light {
    margin-right: 5px;
}

.clock {
    margin-left: 6px;
    text-align: center;
    line-height: 17px;
}
```
